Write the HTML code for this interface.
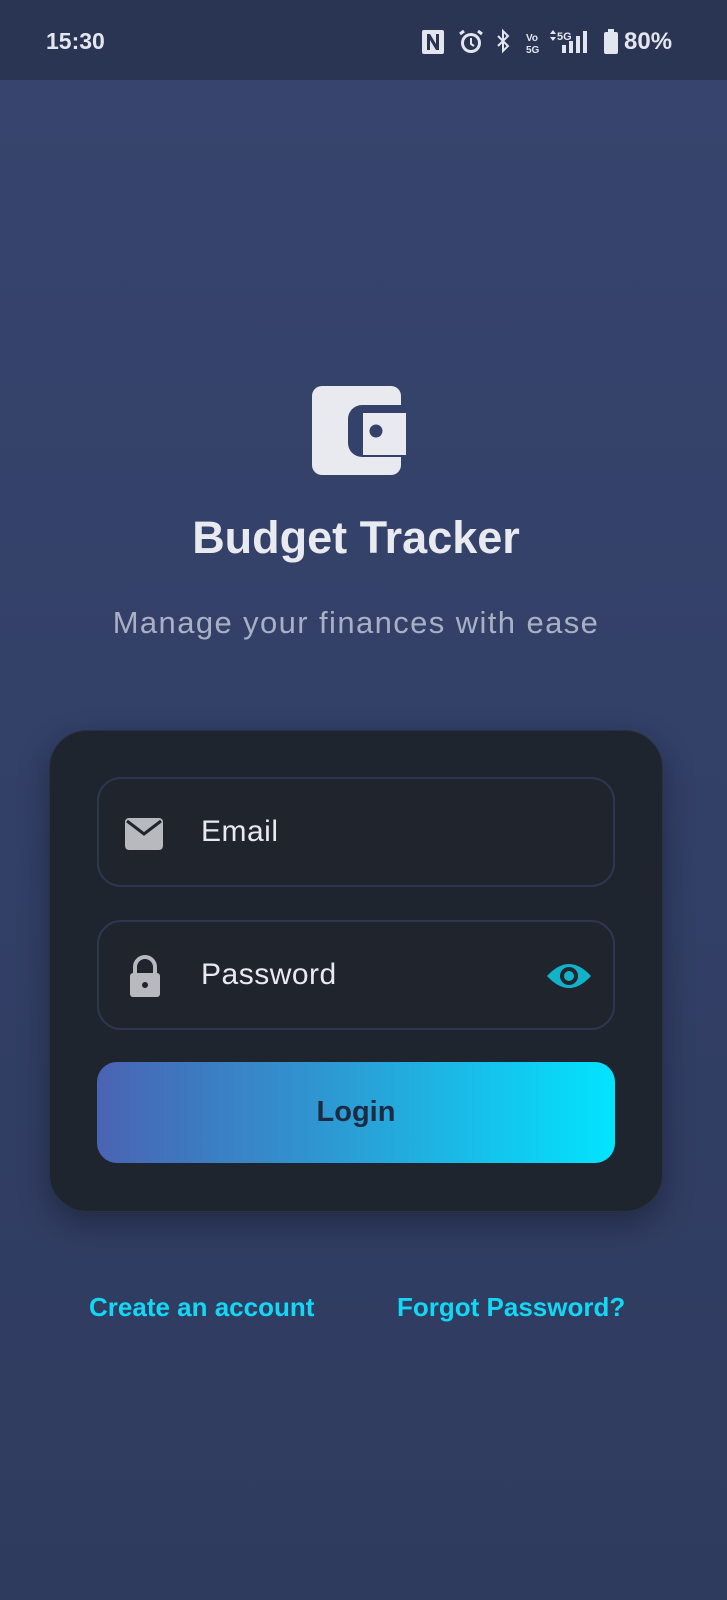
<!DOCTYPE html>
<html><head><meta charset="utf-8"><style>
*{margin:0;padding:0;box-sizing:border-box}
body{width:727px;height:1600px;overflow:hidden;font-family:"Liberation Sans",sans-serif;background:linear-gradient(#37446d 80px,#334068 700px,#2f3b5e 1600px);position:relative}
.sb{position:absolute;top:0;left:0;width:727px;height:80px;background:#2a3453;color:#e3e6ee}
.t{position:absolute;font-weight:bold}
.card{position:absolute;left:49px;top:730px;width:614px;height:482px;background:#1f252f;border-radius:38px;box-shadow:0 12px 30px rgba(15,20,35,.45);border:1px solid #2a3244}
.f{position:absolute;left:47px;width:518px;height:110px;border:2px solid #2f3650;border-radius:24px;background:#1f242d}
.f span{position:absolute;left:102px;top:36px;font-size:30px;color:#e8eaf0;letter-spacing:.5px}
.btn{position:absolute;left:47px;top:331px;width:518px;height:101px;border-radius:20px;background:linear-gradient(90deg,#4a63b3,#2a9fd6 50%,#02e4ff);text-align:center;line-height:101px;font-size:29px;font-weight:bold;color:#1e2a40}
.l{position:absolute;top:1292px;font-size:26px;font-weight:bold;color:#12d7f5}
</style></head><body>
<div class="sb">
<div class="t" style="left:46px;top:28px;font-size:23px">15:30</div>
<svg style="position:absolute;left:420px;top:28px" width="200" height="28" viewBox="0 0 200 28" fill="#e3e6ee">
<rect x="2" y="2" width="22" height="24" rx="2"/><path d="M7 6v16h3V12l6 10h3V6h-3v10L10 6z" fill="#2a3453"/>
<circle cx="51" cy="15" r="10"/><circle cx="51" cy="15" r="7" fill="#2a3453"/><path d="M51 10v6l3 2" stroke="#e3e6ee" stroke-width="2" fill="none"/><path d="M40 6l4-3M62 6l-4-3" stroke="#e3e6ee" stroke-width="3"/>
<path d="M78 8l10 10-5 5V3l5 5-10 10" stroke="#e3e6ee" stroke-width="2" fill="none"/>
<text x="106" y="13" font-size="10" font-weight="bold" font-family="Liberation Sans">Vo</text><text x="106" y="25" font-size="10" font-weight="bold" font-family="Liberation Sans">5G</text>
<text x="137" y="12" font-size="11" font-weight="bold" font-family="Liberation Sans">5G</text><path d="M130 6l3-4 3 4zM130 9l3 4 3-4z"/>
<rect x="142" y="17" width="4" height="8"/><rect x="149" y="13" width="4" height="12"/><rect x="156" y="8" width="4" height="17"/><rect x="163" y="3" width="4" height="22"/>
<rect x="184" y="4" width="14" height="22" rx="2"/><rect x="188" y="1" width="6" height="4"/>
</svg>
<div class="t" style="left:624px;top:28px;font-size:24px">80%</div>
</div>
<svg style="position:absolute;left:312px;top:386px" width="94" height="90" viewBox="0 0 94 90">
<rect x="0" y="0" width="89" height="89" rx="10" fill="#e8eaf0"/>
<path d="M94 19H50a14 14 0 0 0-14 14v24a14 14 0 0 0 14 14h44z" fill="#34416a"/>
<rect x="51" y="27" width="43" height="42" fill="#e8eaf0"/>
<circle cx="64" cy="45" r="6.5" fill="#34416a"/>
</svg>
<div class="t" style="left:0;width:712px;text-align:center;top:512px;font-size:45px;color:#e8eaf0">Budget Tracker</div>
<div style="position:absolute;left:0;width:712px;text-align:center;top:605px;font-size:31px;color:#a9b0c4;letter-spacing:1.4px">Manage your finances with ease</div>
<div class="card">
<div class="f" style="top:46px">
<svg style="position:absolute;left:24px;top:36px" width="42" height="36" viewBox="0 0 42 36"><rect x="2" y="3" width="38" height="32" rx="4" fill="#b7b9be"/><path d="M4 6l17 13 17-13" stroke="#1f242d" stroke-width="3" fill="none"/></svg>
<span>Email</span></div>
<div class="f" style="top:189px">
<svg style="position:absolute;left:28px;top:32px" width="36" height="46" viewBox="0 0 36 46"><path d="M8 20v-7a10 10 0 0 1 20 0v7" stroke="#b7b9be" stroke-width="4" fill="none"/><rect x="3" y="19" width="30" height="24" rx="3" fill="#b7b9be"/><circle cx="18" cy="31" r="3" fill="#1f242d"/></svg>
<span>Password</span>
<svg style="position:absolute;left:447px;top:38px" width="46" height="32" viewBox="0 0 46 32"><path d="M1 16Q23-8 45 16Q23 40 1 16z" fill="#11b3c9"/><circle cx="23" cy="16" r="9" fill="#1f242d"/><circle cx="23" cy="16" r="5" fill="#11b3c9"/></svg>
</div>
<div class="btn">Login</div>
</div>
<div class="l" style="left:89px">Create an account</div>
<div class="l" style="left:397px">Forgot Password?</div>
</body></html>
